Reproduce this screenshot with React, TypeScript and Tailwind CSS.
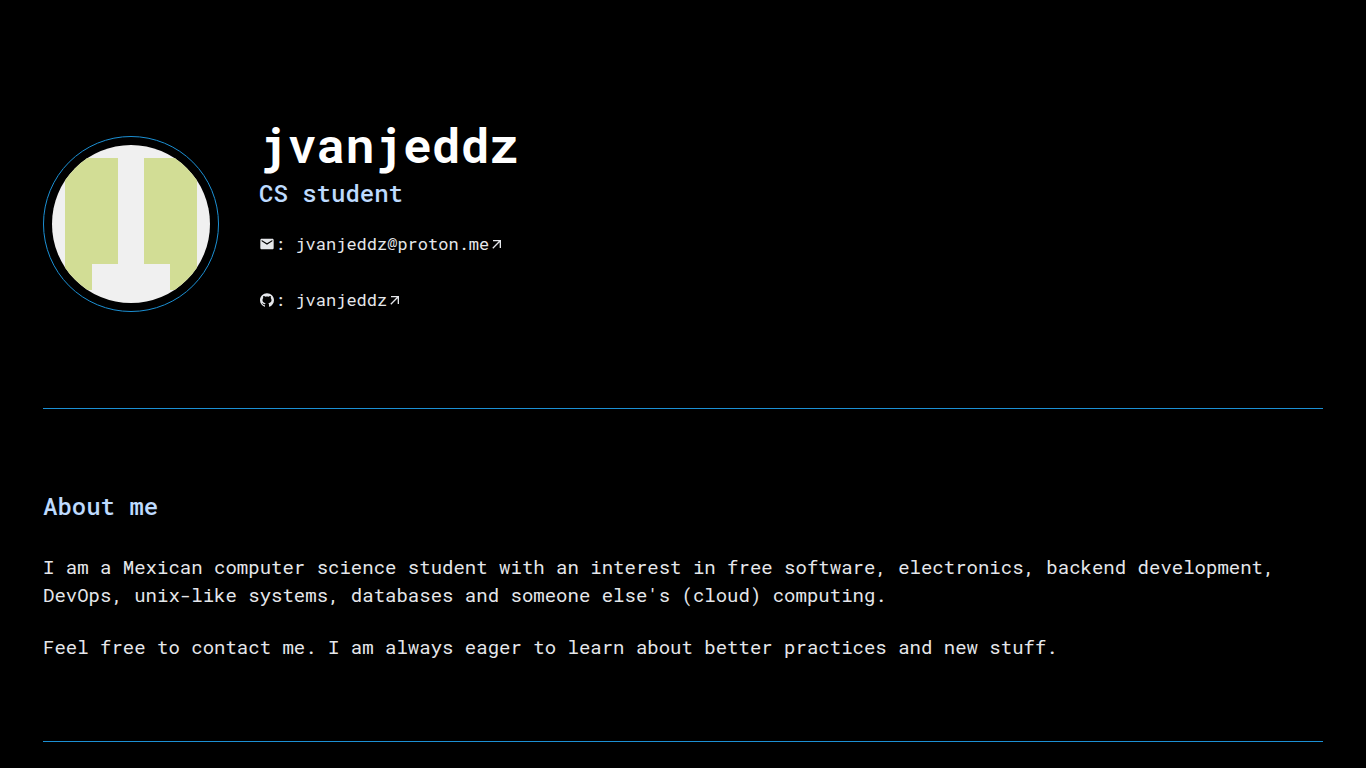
import { MdEmail, MdArrowOutward } from "react-icons/md";
import { AiFillGithub } from "react-icons/ai";
import type { ReactNode } from "react";

function Contact({ href, icon, label, text }: { href: string; icon: ReactNode; label: string; text: string }) {
  return (
    <p className="flex items-center text-[17px] leading-7">
      <span className="flex" role="img" aria-label={label}>{icon}</span>
      <span className="whitespace-pre">{": "}</span>
      <a href={href} className="flex items-center">
        {text}
        <MdArrowOutward className="size-4" aria-hidden="true" />
      </a>
    </p>
  );
}

function Avatar() {
  return (
    <div className="size-44 shrink-0 rounded-full border border-[#1c90d4] p-2">
      <svg viewBox="0 0 158 158" className="size-full rounded-full" role="img" aria-label="jvanjeddz avatar">
        <rect width="158" height="158" fill="#f0f0f0" />
        <path d="M13 13H66V119H40V145H13ZM92 13H145V145H118V119H92Z" fill="#d2dd95" />
      </svg>
    </div>
  );
}

export default function App() {
  return (
    <div className="min-h-screen bg-black px-[43px] font-['Roboto_Mono','DejaVu_Sans_Mono',monospace] text-gray-200">
      <header className="flex items-center gap-10 border-b border-[#1c90d4] pt-[121px] pb-[81px]">
        <Avatar />
        <div className="pb-[13px]">
          <h1 className="text-5xl font-bold text-white">jvanjeddz</h1>
          <p className="mt-2 text-2xl font-medium text-blue-200">CS student</p>
          <div className="mt-[21px] flex flex-col gap-7">
            <Contact href="mailto:jvanjeddz@proton.me" icon={<MdEmail className="size-4" />} label="Email" text="jvanjeddz@proton.me" />
            <Contact href="https://github.com/jvanjeddz" icon={<AiFillGithub className="size-4" />} label="GitHub" text="jvanjeddz" />
          </div>
        </div>
      </header>
      <main className="border-b border-[#1c90d4] pt-[81px] pb-20">
        <h2 className="text-2xl font-medium text-blue-200">About me</h2>
        <p className="mt-[31px] text-[19px] leading-7">I am a Mexican computer science student with an interest in free software, electronics, backend development, DevOps, unix-like systems, databases and someone else's (cloud) computing.</p>
        <p className="mt-6 text-[19px] leading-7">Feel free to contact me. I am always eager to learn about better practices and new stuff.</p>
      </main>
    </div>
  );
}
